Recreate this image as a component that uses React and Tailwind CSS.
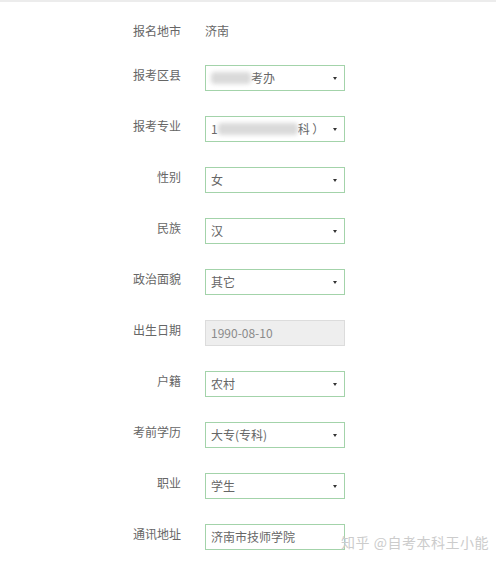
const rows = [
  { label: "报考区县", value: "考办", blurBefore: "w-[40px]", select: true },
  { label: "报考专业", value: "科 ）", lead: "1", blurBefore: "w-[80px]", select: true },
  { label: "性别", value: "女", select: true },
  { label: "民族", value: "汉", select: true },
  { label: "政治面貌", value: "其它", select: true },
  { label: "出生日期", value: "1990-08-10", disabled: true },
  { label: "户籍", value: "农村", select: true },
  { label: "考前学历", value: "大专(专科)", select: true },
  { label: "职业", value: "学生", select: true },
  { label: "通讯地址", value: "济南市技师学院" },
];

function Field({ row }) {
  if (row.disabled) {
    return (
      <div className="w-[140px] h-[26px] border border-[#dcdcdc] bg-[#eeeeee] flex items-center pl-[5px] text-[#8a8a8a] text-[12px]">
        {row.value}
      </div>
    );
  }
  return (
    <div className="w-[140px] h-[26px] border border-[#a3d3aa] bg-white flex items-center pl-[5px] pr-[7px] text-[#666] text-[12px]">
      {row.lead && <span>{row.lead}</span>}
      {row.blurBefore && (
        <span className={`${row.blurBefore} h-[12px] bg-[#dadada] blur-[2px] rounded-sm`}></span>
      )}
      <span className="flex-1 truncate">{row.value}</span>
      {row.select && (
        <span className="w-0 h-0 border-l-[2px] border-r-[2px] border-t-[3px] border-l-transparent border-r-transparent border-t-[#333]"></span>
      )}
    </div>
  );
}

export default function App() {
  return (
    <div
      className="relative w-[496px] h-[565px] bg-white border-t-2 border-[#ececec] overflow-hidden"
      style={{ fontFamily: '"Noto Sans CJK SC", "Noto Sans", sans-serif' }}
    >
      <div className="pt-[16px] flex flex-col">
        <div className="flex items-center h-[26px] text-[12px] text-[#666]">
          <div className="w-[181px] text-right">报名地市</div>
          <div className="ml-[24px]">济南</div>
        </div>
        <div className="mt-[21px] flex flex-col gap-[25px]">
          {rows.map((row) => (
            <div key={row.label} className="flex items-start">
              <div className="w-[181px] text-right text-[12px] text-[#666] leading-[20px]">{row.label}</div>
              <div className="ml-[24px]">
                <Field row={row} />
              </div>
            </div>
          ))}
        </div>
      </div>
      <div className="absolute left-[341px] top-[530px] text-[14px] text-[#cccccc] tracking-[0.5px]">
        知乎 @自考本科王小能
      </div>
    </div>
  );
}
